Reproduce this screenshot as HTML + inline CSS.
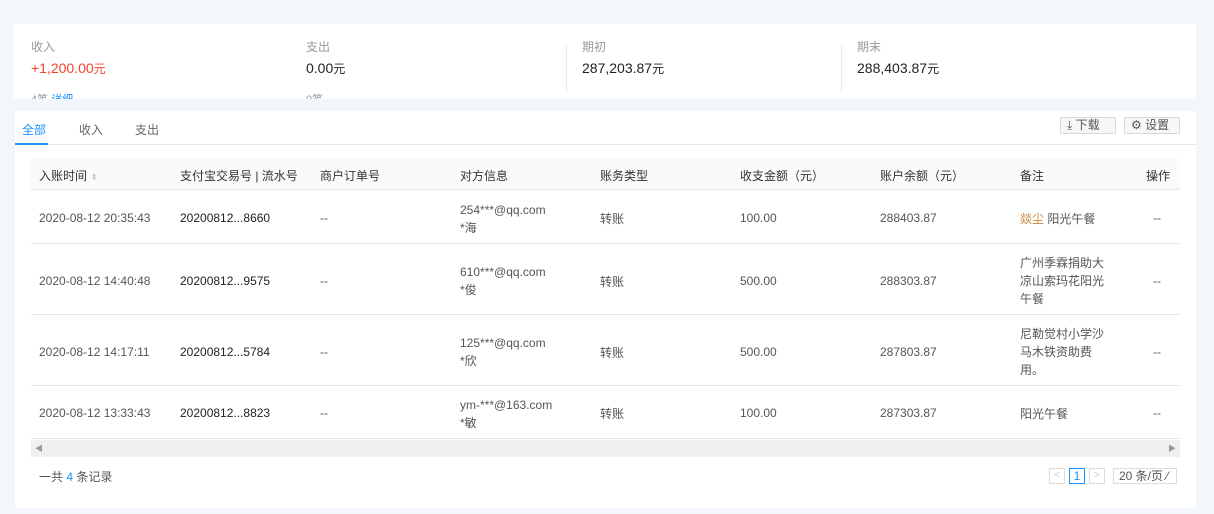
<!DOCTYPE html>
<html><head><meta charset="utf-8"><style>
*{margin:0;padding:0;box-sizing:border-box}
body{width:1214px;height:514px;background:#f3f6fa;font-family:"Liberation Sans","Noto Sans CJK SC",sans-serif;font-size:12px;color:#555;position:relative;overflow:hidden}
.a{position:absolute;white-space:nowrap}
.card{position:absolute;background:#fff}
.lbl{color:#999;font-size:12px}
.val{color:#222;font-size:14px}
.th{color:#333;font-size:12px}
.row{position:absolute;left:31px;width:1149px;border-bottom:1px solid #e8e8e8}
.btn{position:absolute;border:1px solid #d9d9d9;background:#f7f7f7;border-radius:2px;font-size:12px;color:#555;height:17px;line-height:15px;padding-left:6px}
</style></head><body>
<div class="card" style="left:13px;top:24px;width:1183px;height:75px;overflow:hidden">
 <div class="a lbl" style="left:18px;top:14px">收入</div>
 <div class="a val" style="left:18px;top:36px;color:#f5432e">+1,200.00<span style="font-size:12px">元</span></div>
 <div class="a lbl" style="left:18px;top:67px;font-size:11px">4笔 <span style="color:#1890ff">详细</span></div>
 <div class="a lbl" style="left:293px;top:14px">支出</div>
 <div class="a val" style="left:293px;top:36px">0.00<span style="font-size:12px">元</span></div>
 <div class="a lbl" style="left:293px;top:67px;font-size:11px">0笔</div>
 <div class="a" style="left:553px;top:22px;width:1px;height:46px;background:#e8e8e8"></div>
 <div class="a lbl" style="left:569px;top:14px">期初</div>
 <div class="a val" style="left:569px;top:36px">287,203.87<span style="font-size:12px">元</span></div>
 <div class="a" style="left:828px;top:22px;width:1px;height:46px;background:#e8e8e8"></div>
 <div class="a lbl" style="left:844px;top:14px">期末</div>
 <div class="a val" style="left:844px;top:36px">288,403.87<span style="font-size:12px">元</span></div>
</div>
<div class="card" style="left:15px;top:111px;width:1181px;height:397px"></div>
<div class="a" style="left:15px;top:144px;width:1181px;height:1px;background:#e8e8e8"></div>
<div class="a" style="left:15px;top:143px;width:33px;height:2px;background:#1890ff"></div>
<div class="a" style="left:22px;top:121px;color:#1890ff;font-size:12px">全部</div>
<div class="a" style="left:79px;top:121px;color:#666">收入</div>
<div class="a" style="left:135px;top:121px;color:#666">支出</div>
<div class="btn" style="left:1060px;top:117px;width:56px">⤓ 下载</div>
<div class="btn" style="left:1124px;top:117px;width:56px">⚙ 设置</div>
<div class="a" style="left:31px;top:158px;width:1149px;height:32px;background:#fafafa;border-bottom:1px solid #e8e8e8"></div>
<div class="a th" style="left:39px;top:167px">入账时间 <span style="color:#ccc;font-size:9px">⬍</span></div>
<div class="a th" style="left:180px;top:167px">支付宝交易号 | 流水号</div>
<div class="a th" style="left:320px;top:167px">商户订单号</div>
<div class="a th" style="left:460px;top:167px">对方信息</div>
<div class="a th" style="left:600px;top:167px">账务类型</div>
<div class="a th" style="left:740px;top:167px">收支金额（元）</div>
<div class="a th" style="left:880px;top:167px">账户余额（元）</div>
<div class="a th" style="left:1020px;top:167px">备注</div>
<div class="a th" style="left:1146px;top:167px">操作</div>
<div class="row" style="top:190px;height:54px"></div>
<div class="row" style="top:244px;height:71px"></div>
<div class="row" style="top:315px;height:71px"></div>
<div class="row" style="top:386px;height:53px"></div>
<div class="a" style="left:39px;top:211px">2020-08-12 20:35:43</div><div class="a" style="left:180px;top:211px;color:#222">20200812...8660</div><div class="a" style="left:320px;top:211px">--</div><div class="a" style="left:460px;top:201px;line-height:18px">254***@qq.com<br>*海</div><div class="a" style="left:600px;top:210px">转账</div><div class="a" style="left:740px;top:211px">100.00</div><div class="a" style="left:880px;top:211px">288403.87</div><div class="a" style="left:1020px;top:210px"><span style="color:#c9873a">燚尘</span> 阳光午餐</div><div class="a" style="left:1153px;top:211px">--</div>
<div class="a" style="left:39px;top:274px">2020-08-12 14:40:48</div><div class="a" style="left:180px;top:274px;color:#222">20200812...9575</div><div class="a" style="left:320px;top:274px">--</div><div class="a" style="left:460px;top:263px;line-height:18px">610***@qq.com<br>*俊</div><div class="a" style="left:600px;top:273px">转账</div><div class="a" style="left:740px;top:274px">500.00</div><div class="a" style="left:880px;top:274px">288303.87</div><div class="a" style="left:1020px;top:254px;line-height:18px">广州季霖捐助大<br>凉山索玛花阳光<br>午餐</div><div class="a" style="left:1153px;top:274px">--</div>
<div class="a" style="left:39px;top:345px">2020-08-12 14:17:11</div><div class="a" style="left:180px;top:345px;color:#222">20200812...5784</div><div class="a" style="left:320px;top:345px">--</div><div class="a" style="left:460px;top:334px;line-height:18px">125***@qq.com<br>*欣</div><div class="a" style="left:600px;top:344px">转账</div><div class="a" style="left:740px;top:345px">500.00</div><div class="a" style="left:880px;top:345px">287803.87</div><div class="a" style="left:1020px;top:325px;line-height:18px">尼勒觉村小学沙<br>马木铁资助费<br>用。</div><div class="a" style="left:1153px;top:345px">--</div>
<div class="a" style="left:39px;top:406px">2020-08-12 13:33:43</div><div class="a" style="left:180px;top:406px;color:#222">20200812...8823</div><div class="a" style="left:320px;top:406px">--</div><div class="a" style="left:460px;top:396px;line-height:18px">ym-***@163.com<br>*敏</div><div class="a" style="left:600px;top:405px">转账</div><div class="a" style="left:740px;top:406px">100.00</div><div class="a" style="left:880px;top:406px">287303.87</div><div class="a" style="left:1020px;top:405px">阳光午餐</div><div class="a" style="left:1153px;top:406px">--</div>
<div class="a" style="left:31px;top:440px;width:1149px;height:17px;background:#f0f0f0"></div>
<div class="a" style="left:35px;top:443px;font-size:8px;color:#999">◀</div>
<div class="a" style="left:1168px;top:443px;font-size:8px;color:#999">▶</div>
<div class="a" style="left:39px;top:468px;color:#555">一共 <span style="color:#1890ff">4</span> 条记录</div>
<div class="a" style="left:1049px;top:468px;width:16px;height:16px;border:1px solid #ddd;color:#ccc;text-align:center;line-height:14px;font-size:10px">&lt;</div>
<div class="a" style="left:1069px;top:468px;width:16px;height:16px;border:1px solid #1890ff;color:#1890ff;text-align:center;line-height:14px">1</div>
<div class="a" style="left:1089px;top:468px;width:16px;height:16px;border:1px solid #ddd;color:#ccc;text-align:center;line-height:14px;font-size:10px">&gt;</div>
<div class="a" style="left:1113px;top:468px;width:64px;height:16px;border:1px solid #ddd;line-height:14px;padding-left:5px">20 条/页 ⁄</div>
</body></html>
